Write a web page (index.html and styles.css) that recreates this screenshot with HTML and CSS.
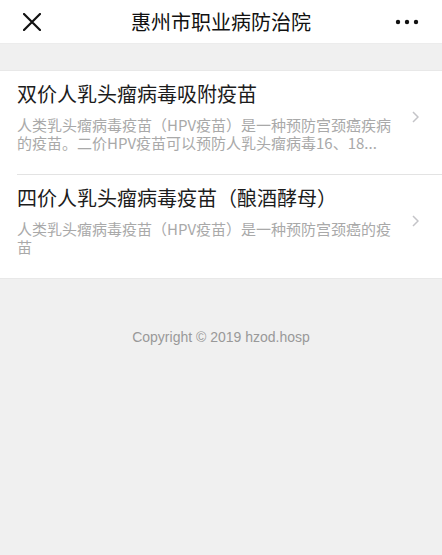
FILE: index.html
```html
<!DOCTYPE html>
<html lang="zh-CN">

<head>
  <meta charset="UTF-8">
  <meta name="viewport" content="width=device-width, initial-scale=1.0">
  <title>惠州市职业病防治院</title>
  <link rel="stylesheet" href="styles.css">
</head>

<body>
  <header class="nav_bar">
    <span class="nav_btn nav_close">
      <svg width="18" height="18" viewBox="0 0 18 18">
        <path d="M1 1 L17 17 M17 1 L1 17" stroke="#111" stroke-width="2.2" stroke-linecap="round" fill="none" />
      </svg>
    </span>
    <h1 class="nav_title">惠州市职业病防治院</h1>
    <span class="nav_btn nav_more">
      <svg width="24" height="6" viewBox="0 0 24 6">
        <circle cx="3" cy="3" r="2.2" fill="#111" />
        <circle cx="12" cy="3" r="2.2" fill="#111" />
        <circle cx="21" cy="3" r="2.2" fill="#111" />
      </svg>
    </span>
  </header>

  <section class="vaccine_list">
    <div class="item">
      <div class="item_text">
        <p class="item_title">双价人乳头瘤病毒吸附疫苗</p>
        <p class="item_desc">人类乳头瘤病毒疫苗（HPV疫苗）是一种预防宫颈癌疾病的疫苗。二价HPV疫苗可以预防人乳头瘤病毒16、18...</p>
      </div>
      <span class="arrow">
        <svg width="7" height="12" viewBox="0 0 7 12">
          <path d="M1 1 L6 6 L1 11" stroke="#c4c4c8" stroke-width="1.5" fill="none" />
        </svg>
      </span>
    </div>

    <div class="item">
      <div class="item_text">
        <p class="item_title">四价人乳头瘤病毒疫苗（酿酒酵母）</p>
        <p class="item_desc">人类乳头瘤病毒疫苗（HPV疫苗）是一种预防宫颈癌的疫苗</p>
      </div>
      <span class="arrow">
        <svg width="7" height="12" viewBox="0 0 7 12">
          <path d="M1 1 L6 6 L1 11" stroke="#c4c4c8" stroke-width="1.5" fill="none" />
        </svg>
      </span>
    </div>
  </section>

  <footer class="copyright">Copyright © 2019 hzod.hosp</footer>
</body>

</html>
```

FILE: styles.css
```css
body {
  margin: 0;
  padding: 0;
  background-color: #f0f0f0;
  font-family: "Liberation Sans", "Noto Sans CJK SC", sans-serif;
}

.nav_bar {
  display: flex;
  align-items: center;
  height: 43px;
  background-color: #fff;
  border-bottom: 1px solid #ececec;
}

.nav_btn {
  width: 64px;
  display: flex;
  align-items: center;
  box-sizing: border-box;
}

.nav_close {
  justify-content: flex-start;
  padding-left: 23px;
}

.nav_more {
  justify-content: flex-end;
  padding-right: 23px;
}

.nav_title {
  flex: 1;
  margin: 0;
  text-align: center;
  font-size: 20px;
  font-weight: 400;
  color: #111;
}

.vaccine_list {
  margin-top: 26px;
  padding-left: 17px;
  background-color: #fff;
  border-top: 1px solid #e8e8e8;
  border-bottom: 1px solid #e8e8e8;
}

.item {
  display: flex;
  align-items: center;
  padding: 11px 0 23px 0;
}

.item+.item {
  border-top: 1px solid #e3e3e3;
}

.item_text {
  flex: 1;
  min-width: 0;
  font-family: "Noto Sans CJK SC", sans-serif;
}

.item_title {
  margin: 0;
  font-size: 20px;
  line-height: 24px;
  color: #1c1c1c;
}

.item_desc {
  margin: 10px 0 0 0;
  font-size: 15px;
  line-height: 17.5px;
  color: #a9a9a9;
}

.arrow {
  width: 42px;
  display: flex;
  justify-content: flex-start;
  padding-left: 12px;
  box-sizing: border-box;
}

.copyright {
  padding-top: 48px;
  text-align: center;
  font-size: 14px;
  line-height: 20px;
  color: #999;
}
```
